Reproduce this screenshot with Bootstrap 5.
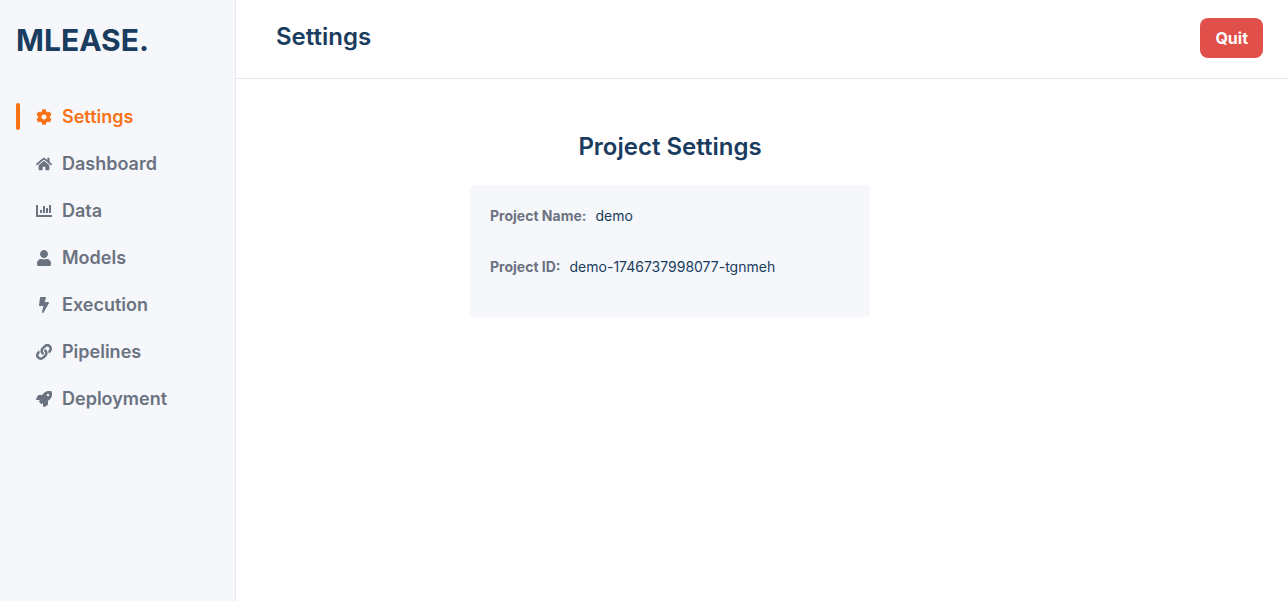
<!DOCTYPE html>
<html lang="en">
<head>
<meta charset="utf-8">
<meta name="viewport" content="width=device-width, initial-scale=1">
<title>MLEASE. Settings</title>
<link rel="stylesheet" href="https://cdn.jsdelivr.net/npm/bootstrap@5.3.0/dist/css/bootstrap.min.css">
<style>
  body { font-family: Inter, sans-serif; color: #1a3c5e; background: #fff; }
  .sidebar { flex: 0 0 236px; background: #f5f7fb; border-right: 1px solid #e5e7eb; padding: 16px; }
  .brand { font-size: 30px; line-height: 48px; font-weight: 700; color: #1a3c5e; }
  .side-nav { margin-top: 39px; gap: 20px; }
  .side-nav .nav-link { position: relative; font-size: 18px; line-height: 27px; font-weight: 600; color: #6b7280; padding: 0 0 0 20px; gap: 10px; }
  .side-nav .nav-link:hover, .side-nav .nav-link.active { color: #f97316; }
  .side-nav .nav-link.active::before { content: ""; position: absolute; left: 0; top: 0; bottom: 0; width: 4px; border-radius: 2px; background: currentColor; }
  .side-nav svg { width: 16px; height: 16px; fill: currentColor; }
  .topbar { border-bottom: 1px solid #e5e7eb; padding: 18px 25px 20px 40px; }
  .topbar h1 { font-size: 24px; line-height: 38px; font-weight: 600; }
  .btn-quit { --bs-btn-color: #fff; --bs-btn-bg: #e14f4b; --bs-btn-hover-color: #fff; --bs-btn-hover-bg: #c93f3c; font-size: 16px; line-height: 24px; font-weight: 700; padding: 8px 15px; border: 0; border-radius: 8px; }
  .content { padding: 53px 184px 40px 0; }
  .project { width: 100%; max-width: 400px; }
  .project h2 { font-size: 24px; line-height: 29px; font-weight: 600; margin-bottom: 24px; }
  .details { background: #f5f7fb; border-radius: 4px; padding: 20px 20px 40px; font-size: 14px; line-height: 21px; }
  .details dl { gap: 30px; }
  .details dl > div { gap: 9px; }
  .details dt { color: #6b7280; font-weight: 700; }
</style>
</head>
<body>
<div class="d-flex min-vh-100">
  <aside class="sidebar">
    <a class="brand d-block text-decoration-none" href="#">MLEASE.</a>
    <nav class="side-nav nav flex-column" aria-label="Main">
      <a class="nav-link active d-flex align-items-center" href="#" aria-current="page">
        <svg viewBox="0 0 512 512" aria-hidden="true"><path d="M487.4 315.7l-42.6-24.6c4.3-23.2 4.3-47 0-70.2l42.6-24.6c4.9-2.8 7.1-8.6 5.5-14-11.1-35.6-30-67.8-54.7-94.6-3.8-4.1-10-5.1-14.8-2.3L380.8 110c-17.9-15.4-38.5-27.3-60.8-35.1V25.8c0-5.6-3.9-10.5-9.4-11.7-36.7-8.2-74.3-7.8-109.2 0-5.5 1.2-9.4 6.1-9.4 11.7V75c-22.2 7.9-42.8 19.8-60.8 35.1L88.7 85.5c-4.9-2.8-11-1.9-14.8 2.3-24.7 26.7-43.6 58.9-54.7 94.6-1.7 5.4.6 11.2 5.5 14L67.3 221c-4.3 23.2-4.3 47 0 70.2l-42.6 24.6c-4.9 2.8-7.1 8.6-5.5 14 11.1 35.6 30 67.8 54.7 94.6 3.8 4.1 10 5.1 14.8 2.3l42.6-24.6c17.9 15.4 38.5 27.3 60.8 35.1v49.2c0 5.6 3.9 10.5 9.4 11.7 36.7 8.2 74.3 7.8 109.2 0 5.5-1.2 9.4-6.1 9.4-11.7v-49.2c22.2-7.9 42.8-19.8 60.8-35.1l42.6 24.6c4.9 2.8 11 1.9 14.8-2.3 24.7-26.7 43.6-58.9 54.7-94.6 1.5-5.5-.7-11.3-5.6-14.1zM256 336c-44.1 0-80-35.9-80-80s35.9-80 80-80 80 35.9 80 80-35.9 80-80 80z"/></svg>
        Settings</a>
      <a class="nav-link d-flex align-items-center" href="#">
        <svg viewBox="0 0 576 512" aria-hidden="true"><path d="M280.37 148.26L96 300.11V464a16 16 0 0 0 16 16l112.06-.29a16 16 0 0 0 15.92-16V368a16 16 0 0 1 16-16h64a16 16 0 0 1 16 16v95.64a16 16 0 0 0 16 16.05L464 480a16 16 0 0 0 16-16V300L295.67 148.26a12.19 12.19 0 0 0-15.3 0zM571.6 251.47L488 182.56V44.05a12 12 0 0 0-12-12h-56a12 12 0 0 0-12 12v72.61L318.47 43a48 48 0 0 0-61 0L4.34 251.47a12 12 0 0 0-1.6 16.9l25.5 31A12 12 0 0 0 45.15 301l235.22-193.74a12.19 12.19 0 0 1 15.3 0L530.9 301a12 12 0 0 0 16.9-1.6l25.5-31a12 12 0 0 0-1.7-16.93z"/></svg>
        Dashboard</a>
      <a class="nav-link d-flex align-items-center" href="#">
        <svg viewBox="0 0 512 512" aria-hidden="true"><path d="M332.8 320h38.4c6.4 0 12.8-6.4 12.8-12.8V172.8c0-6.4-6.4-12.8-12.8-12.8h-38.4c-6.4 0-12.8 6.4-12.8 12.8v134.4c0 6.4 6.4 12.8 12.8 12.8zm96 0h38.4c6.4 0 12.8-6.4 12.8-12.8V76.8c0-6.4-6.4-12.8-12.8-12.8h-38.4c-6.4 0-12.8 6.4-12.8 12.8v230.4c0 6.4 6.4 12.8 12.8 12.8zm-288 0h38.4c6.4 0 12.8-6.4 12.8-12.8v-70.4c0-6.4-6.4-12.8-12.8-12.8h-38.4c-6.4 0-12.8 6.4-12.8 12.8v70.4c0 6.4 6.4 12.8 12.8 12.8zm96 0h38.4c6.4 0 12.8-6.4 12.8-12.8V108.8c0-6.4-6.4-12.8-12.8-12.8h-38.4c-6.4 0-12.8 6.4-12.8 12.8v198.4c0 6.4 6.4 12.8 12.8 12.8zM496 384H64V80c0-8.84-7.16-16-16-16H16C7.16 64 0 71.16 0 80v336c0 17.67 14.33 32 32 32h464c8.84 0 16-7.16 16-16v-32c0-8.84-7.16-16-16-16z"/></svg>
        Data</a>
      <a class="nav-link d-flex align-items-center" href="#">
        <svg viewBox="0 0 448 512" aria-hidden="true"><path d="M224 256c70.7 0 128-57.3 128-128S294.7 0 224 0 96 57.3 96 128s57.3 128 128 128zm89.6 32h-16.7c-22.2 10.2-46.9 16-72.9 16s-50.6-5.8-72.9-16h-16.7C60.2 288 0 348.2 0 422.4V464c0 26.5 21.5 48 48 48h352c26.5 0 48-21.5 48-48v-41.6c0-74.2-60.2-134.4-134.4-134.4z"/></svg>
        Models</a>
      <a class="nav-link d-flex align-items-center" href="#">
        <svg viewBox="0 0 320 512" aria-hidden="true"><path d="M296 160H180.6l42.6-129.8C227.2 15 215.7 0 200 0H56C44 0 33.8 8.9 32.2 20.8l-32 240C-1.7 275.2 9.5 288 24 288h118.7L96.6 482.5c-3.6 15.2 8 29.5 23.3 29.5 8.4 0 16.4-4.4 20.8-12l176-304c9.3-15.9-2.2-36-20.7-36z"/></svg>
        Execution</a>
      <a class="nav-link d-flex align-items-center" href="#">
        <svg viewBox="0 0 512 512" aria-hidden="true"><path d="M326.612 185.391c59.747 59.809 58.927 155.698.36 214.59-.11.12-.24.25-.36.37l-67.2 67.2c-59.27 59.27-155.699 59.262-214.96 0-59.27-59.26-59.27-155.7 0-214.96l37.106-37.106c9.84-9.84 26.786-3.3 27.294 10.606.648 17.722 3.826 35.527 9.69 52.721 1.986 5.822.567 12.262-3.783 16.612l-13.087 13.087c-28.026 28.026-28.905 73.66-1.155 101.96 28.024 28.579 74.086 28.749 102.325.51l67.2-67.19c28.191-28.191 28.073-73.757 0-101.83-3.701-3.694-7.429-6.564-10.341-8.569a16.037 16.037 0 0 1-6.947-12.606c-.396-10.567 3.348-21.456 11.698-29.806l21.054-21.055c5.521-5.521 14.182-6.199 20.584-1.731a152.482 152.482 0 0 1 20.522 17.197zM467.547 44.449c-59.261-59.262-155.69-59.27-214.96 0l-67.2 67.2c-.12.12-.25.25-.36.37-58.566 58.892-59.387 154.781.36 214.59a152.454 152.454 0 0 0 20.521 17.196c6.402 4.468 15.064 3.789 20.584-1.731l21.054-21.055c8.35-8.35 12.094-19.239 11.698-29.806a16.037 16.037 0 0 0-6.947-12.606c-2.912-2.005-6.64-4.875-10.341-8.569-28.073-28.073-28.191-73.639 0-101.83l67.2-67.19c28.239-28.239 74.3-28.069 102.325.51 27.75 28.3 26.872 73.934-1.155 101.96l-13.087 13.087c-4.35 4.35-5.769 10.79-3.783 16.612 5.864 17.194 9.042 34.999 9.69 52.721.509 13.906 17.454 20.446 27.294 10.606l37.106-37.106c59.271-59.259 59.271-155.699.001-214.959z"/></svg>
        Pipelines</a>
      <a class="nav-link d-flex align-items-center" href="#">
        <svg viewBox="0 0 512 512" aria-hidden="true"><path d="M505.12 19.09c-1.19-5.53-6.66-11-12.21-12.18C460.72 0 435.51 0 410.41 0 307.18 0 245.27 55.2 199.05 128H94.84c-16.35.02-35.56 11.88-42.89 26.48L2.52 253.3A28.4 28.4 0 0 0 0 264a24 24 0 0 0 24 24h103.82l-22.48 22.47c-11.36 11.36-13 32.26 0 45.25l50.91 50.9c11.15 11.19 32.15 13.16 45.27 0L224 384.16V488a24 24 0 0 0 24 24 28.56 28.56 0 0 0 10.71-2.52l98.73-49.39c14.63-7.29 26.5-26.5 26.5-42.86V312.8c72.6-46.31 128.04-108.41 128.04-211.1.1-25.2.1-50.4-6.86-82.61ZM384.04 168A40 40 0 1 1 424.05 128 40.02 40.02 0 0 1 384.04 168Z"/></svg>
        Deployment</a>
    </nav>
  </aside>
  <div class="flex-grow-1 d-flex flex-column">
    <header class="topbar d-flex justify-content-between align-items-start">
      <h1 class="mb-0">Settings</h1>
      <button type="button" class="btn btn-quit">Quit</button>
    </header>
    <main class="content">
      <section class="project mx-auto">
        <h2 class="text-center">Project Settings</h2>
        <div class="details">
          <dl class="d-flex flex-column mb-0">
            <div class="d-flex"><dt>Project Name:</dt><dd class="mb-0">demo</dd></div>
            <div class="d-flex"><dt>Project ID:</dt><dd class="mb-0">demo-1746737998077-tgnmeh</dd></div>
          </dl>
        </div>
      </section>
    </main>
  </div>
</div>
<script src="https://cdn.jsdelivr.net/npm/bootstrap@5.3.0/dist/js/bootstrap.bundle.min.js"></script>
</body>
</html>
